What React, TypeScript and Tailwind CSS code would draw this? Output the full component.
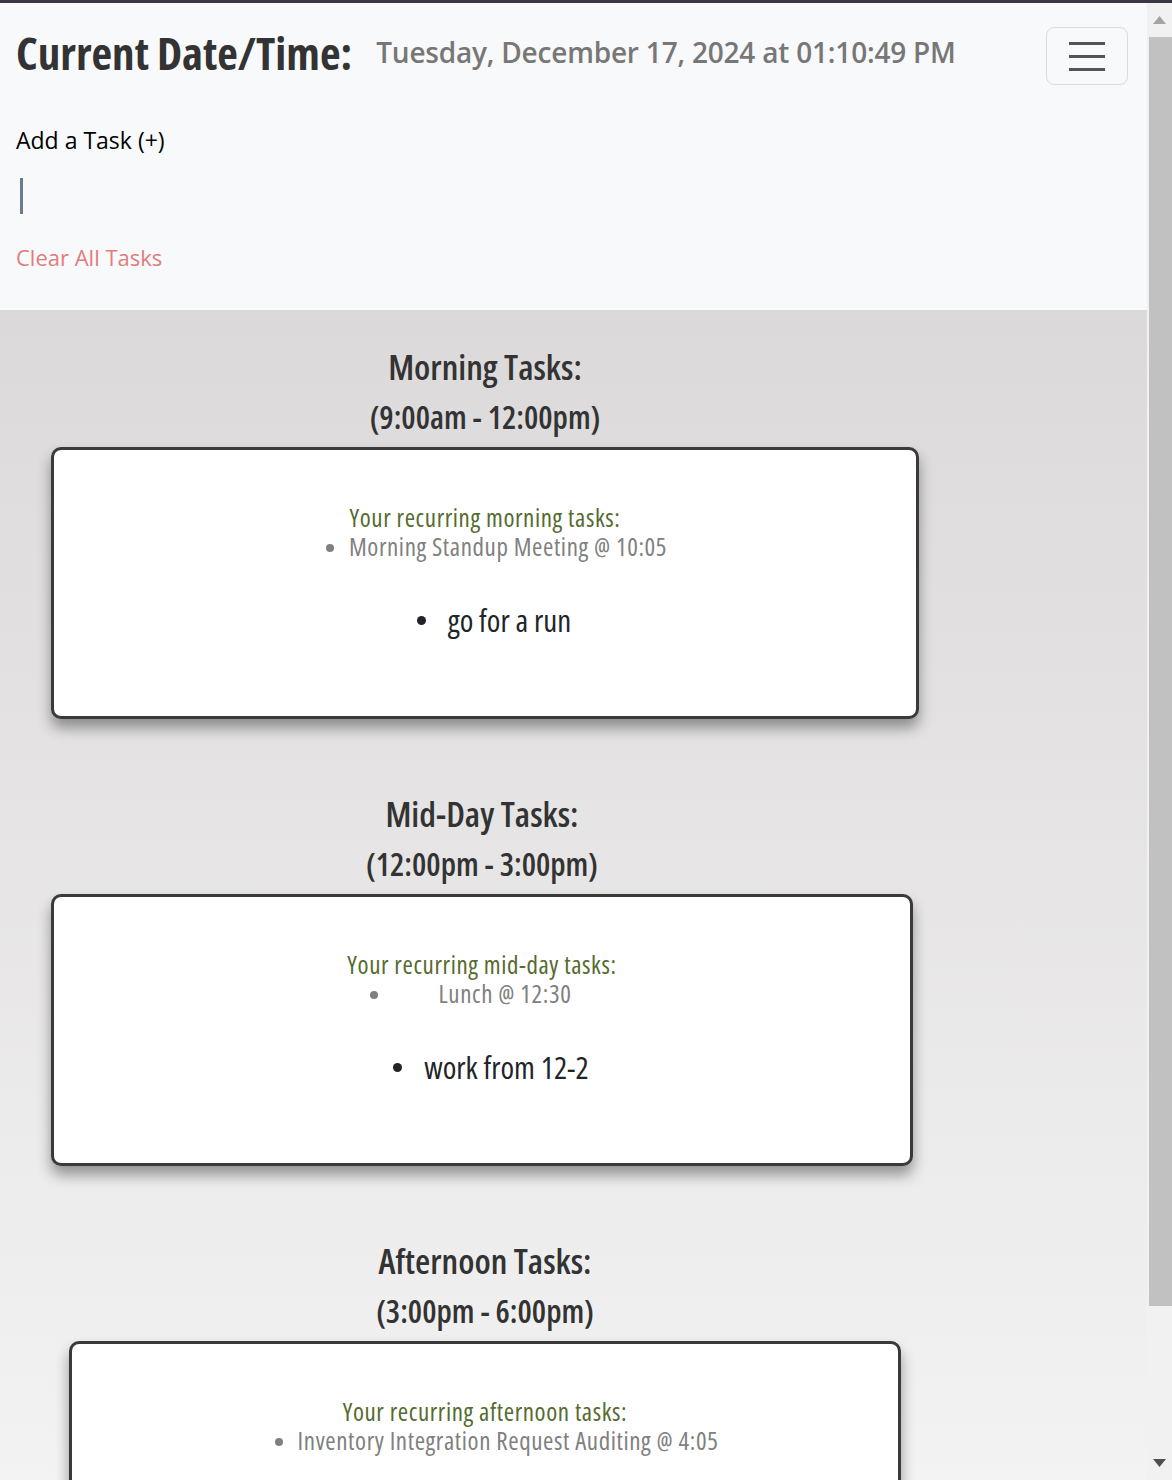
import React from "react";

interface Block {
  title: string;
  hours: string;
  label: string;
  recurring: string;
  tasks: string[];
  width: string;
  shift: string;
}

// Open Sans squeezed to its condensed width stands in for the narrow display face
const narrow = "font-['Open_Sans',sans-serif] [font-stretch:75%]";
const ui = "font-['Open_Sans','Noto_Sans',sans-serif]";

const blocks: Block[] = [
  {
    title: "Morning Tasks:",
    hours: "(9:00am - 12:00pm)",
    label: "Your recurring morning tasks:",
    recurring: "Morning Standup Meeting @ 10:05",
    tasks: ["go for a run"],
    width: "w-[868px]",
    shift: "",
  },
  {
    title: "Mid-Day Tasks:",
    hours: "(12:00pm - 3:00pm)",
    label: "Your recurring mid-day tasks:",
    recurring: "Lunch @ 12:30",
    tasks: ["work from 12-2"],
    width: "w-[862px]",
    shift: "pr-[6px]",
  },
  {
    title: "Afternoon Tasks:",
    hours: "(3:00pm - 6:00pm)",
    label: "Your recurring afternoon tasks:",
    recurring: "Inventory Integration Request Auditing @ 4:05",
    tasks: [],
    width: "w-[832px]",
    shift: "",
  },
];

const TaskBlock = ({ block }: { block: Block }) => (
  <section className={`flex flex-col items-center ${block.shift}`}>
    <h2 className={`${narrow} text-[35px] font-semibold leading-[40px] text-[#333333]`}>
      {block.title}
    </h2>
    <h3 className={`${narrow} mt-[10px] text-[32px] font-semibold leading-[40px] text-[#333333]`}>
      {block.hours}
    </h3>
    <div
      className={`${block.width} mt-[10px] h-[272px] rounded-[10px] border-[3px] border-[#3a3a3a] bg-white shadow-[0_9px_14px_rgba(0,0,0,0.38)] flex flex-col items-center pt-[53px]`}
    >
      <div className="w-fit">
        <p className={`${narrow} text-center text-[25px] font-medium leading-[29px] tracking-[0.6px] text-[#556b2f]`}>
          {block.label}
        </p>
        <ul className={`${narrow} list-disc pl-[46px] text-[25px] font-medium leading-[29px] tracking-[0.6px] text-[#808080] marker:text-[22px]`}>
          <li className="text-center whitespace-nowrap">{block.recurring}</li>
        </ul>
      </div>
      {block.tasks.length > 0 && (
        <ul className={`${narrow} mt-[39px] w-full pl-[18px] text-[31px] leading-[40px] text-[#212529]`}>
          {block.tasks.map((task) => (
            <li key={task} className="flex items-center justify-center gap-[22px]">
              <span className="h-[9px] w-[9px] rounded-full bg-[#212529]" />
              {task}
            </li>
          ))}
        </ul>
      )}
    </div>
  </section>
);

const Scrollbar = () => (
  <aside className="flex w-[25px] shrink-0 flex-col bg-[#f1f1f1]">
    <div className="flex h-[34px] items-center justify-center">
      <svg width="13" height="8" viewBox="0 0 13 8">
        <polygon points="0,8 6.5,0 13,8" fill="#a3a3a3" />
      </svg>
    </div>
    <div className="ml-[2px] h-[1269px] bg-[#c1c1c1]" />
    <div className="flex-1" />
    <div className="flex h-[34px] items-center justify-center">
      <svg width="13" height="8" viewBox="0 0 13 8">
        <polygon points="0,0 13,0 6.5,8" fill="#505050" />
      </svg>
    </div>
  </aside>
);

export default function App() {
  return (
    <div className="flex h-screen flex-col overflow-hidden bg-[#f8f9fa]">
      <div className="h-[3px] shrink-0 bg-[#3b3742]" />
      <div className="flex min-h-0 flex-1">
        <div className="min-w-0 flex-1 overflow-hidden">
          {/* Header */}
          <header className="h-[307px] bg-[#f8f9fa] pl-4 pr-[19px] pt-[24px]">
            <div className="flex items-start justify-between">
              <div className="flex h-[50px] items-center gap-6">
                <h1 className={`${narrow} text-[45px] font-bold leading-none text-[#333333]`}>
                  Current Date/Time:
                </h1>
                <span className={`${ui} text-[28px] font-semibold tracking-[-0.2px] text-[#777777]`}>
                  Tuesday, December 17, 2024 at 01:10:49 PM
                </span>
              </div>
              <button className="flex h-[58px] w-[82px] flex-col items-center justify-center gap-[10px] rounded-[8px] border border-[#dcdcdc]">
                <span className="h-[3px] w-[36px] bg-[#555555]" />
                <span className="h-[3px] w-[36px] bg-[#555555]" />
                <span className="h-[3px] w-[36px] bg-[#555555]" />
              </button>
            </div>
            <p className={`${ui} mt-[40px] text-[23px] leading-[30px] text-black`}>Add a Task (+)</p>
            <div className="ml-[4px] mt-[23px] h-[36px] w-[3px] bg-[#6c7b90]" />
            <p className={`${ui} mt-[28px] text-[22px] leading-[30px] text-[#e37c7c]`}>Clear All Tasks</p>
          </header>

          {/* Task sections */}
          <main className="bg-gradient-to-b from-[#dbd9da] to-[#f7f6f6] pb-[28px] pt-[37px]">
            <div className="flex w-[970px] flex-col gap-[75px]">
              {blocks.map((block) => (
                <TaskBlock key={block.title} block={block} />
              ))}
            </div>
          </main>
        </div>
        <Scrollbar />
      </div>
    </div>
  );
}
